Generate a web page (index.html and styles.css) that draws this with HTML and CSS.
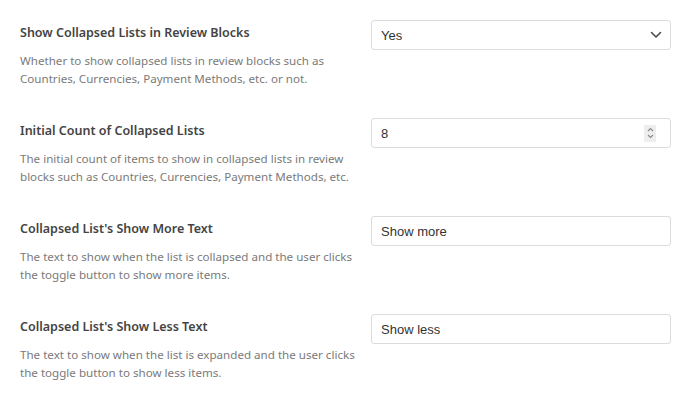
FILE: index.html
```html
<!DOCTYPE html>
<html lang="en">
<head>
  <meta charset="UTF-8" />
  <title>Collapsed Lists Settings</title>
  <link rel="stylesheet" href="styles.css">
</head>
<body>

<div class="settings">

  <!-- Show collapsed lists -->
  <div class="row">
    <div class="info">
      <div class="title">Show Collapsed Lists in Review Blocks</div>
      <div class="desc">Whether to show collapsed lists in review blocks such as Countries, Currencies, Payment Methods, etc. or not.</div>
    </div>
    <div class="field">
      <div class="control select">
        <span>Yes</span>
        <svg class="chevron" width="12" height="8" viewBox="0 0 12 8">
          <path d="M1.5 1.5 L6 6 L10.5 1.5" fill="none" stroke="#4a4a4a" stroke-width="1.6" stroke-linecap="round" stroke-linejoin="round"/>
        </svg>
      </div>
    </div>
  </div>

  <!-- Initial count -->
  <div class="row">
    <div class="info">
      <div class="title">Initial Count of Collapsed Lists</div>
      <div class="desc">The initial count of items to show in collapsed lists in review blocks such as Countries, Currencies, Payment Methods, etc.</div>
    </div>
    <div class="field">
      <div class="control">
        <span>8</span>
        <span class="spinner">
          <svg width="11" height="16" viewBox="0 0 11 16">
            <path d="M3 6 L5.5 3.5 L8 6" fill="none" stroke="#888" stroke-width="1.1"/>
            <path d="M3 10 L5.5 12.5 L8 10" fill="none" stroke="#888" stroke-width="1.1"/>
          </svg>
        </span>
      </div>
    </div>
  </div>

  <!-- Show more text -->
  <div class="row">
    <div class="info">
      <div class="title">Collapsed List's Show More Text</div>
      <div class="desc">The text to show when the list is collapsed and the user clicks the toggle button to show more items.</div>
    </div>
    <div class="field">
      <div class="control"><span>Show more</span></div>
    </div>
  </div>

  <!-- Show less text -->
  <div class="row">
    <div class="info">
      <div class="title">Collapsed List's Show Less Text</div>
      <div class="desc">The text to show when the list is expanded and the user clicks the toggle button to show less items.</div>
    </div>
    <div class="field">
      <div class="control"><span>Show less</span></div>
    </div>
  </div>

</div>

</body>
</html>
```

FILE: styles.css
```css
* {
  box-sizing: border-box;
}

body {
  margin: 0;
  background: #fff;
  font-family: 'Noto Sans', sans-serif;
}

.settings {
  padding: 20px 18px 0 20px;
  display: flex;
  flex-direction: column;
  gap: 30px;
}

.row {
  display: flex;
  align-items: flex-start;
}

.info {
  width: 340px;
}

.title {
  font-size: 12.5px;
  font-weight: 600;
  line-height: 26px;
  color: #444;
}

.desc {
  margin-top: 6px;
  font-size: 11.6px;
  line-height: 18px;
  color: #7a7a7a;
}

.field {
  margin-left: 11px;
  width: 300px;
}

.control {
  height: 30px;
  border: 1px solid #dcdcdc;
  border-radius: 3px;
  padding: 0 9px;
  display: flex;
  align-items: center;
  justify-content: space-between;
  font-family: 'Liberation Sans', Arial, sans-serif;
  font-size: 13px;
  color: #333;
  background: #fff;
}

.select {
  padding-right: 6px;
}

.chevron {
  margin-right: 2px;
}

.spinner {
  width: 12px;
  height: 17px;
  background: #eeeeee;
  display: flex;
  align-items: center;
  justify-content: center;
  margin-right: 5px;
}
```
